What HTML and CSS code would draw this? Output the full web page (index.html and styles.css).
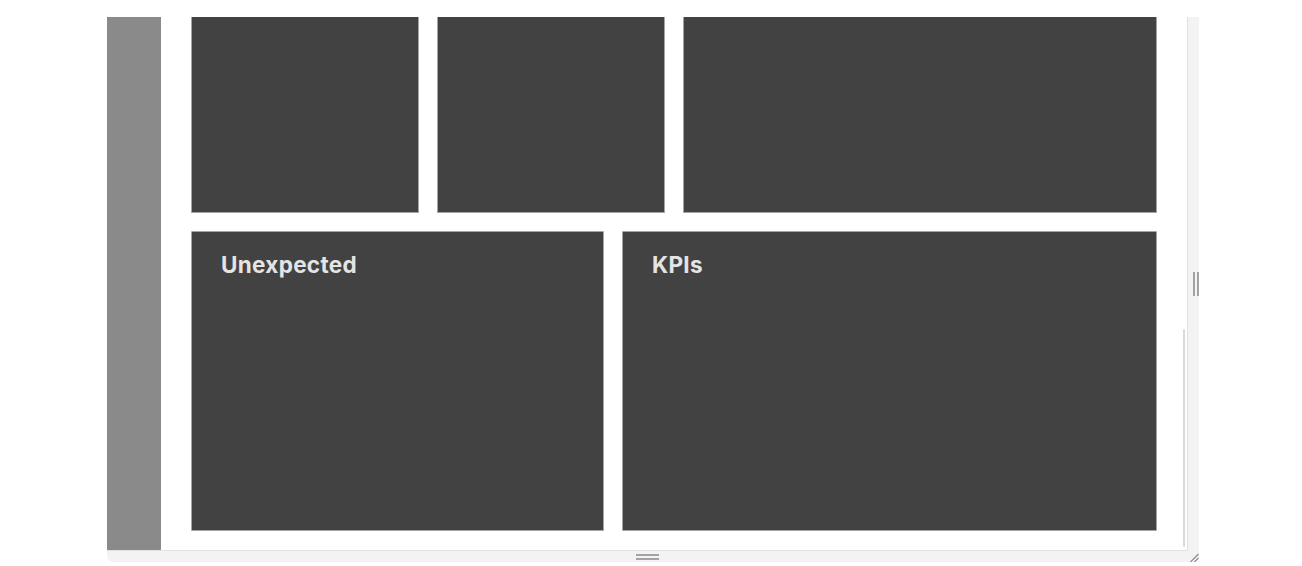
FILE: index.html
```html
<!DOCTYPE html>
<html>
<head>
<meta charset="utf-8">
<link rel="stylesheet" href="styles.css">
</head>
<body>
<div class="stage">
  <div class="resizer">
    <div class="frame">
      <aside class="sidebar"></aside>
      <main class="main">
        <div class="row row-top">
          <section class="panel panel-cut"></section>
          <section class="panel panel-cut"></section>
          <section class="panel panel-cut"></section>
        </div>
        <div class="row row-bottom">
          <section class="panel"><h2 class="panel-title">Unexpected</h2></section>
          <section class="panel"><h2 class="panel-title">KPIs</h2></section>
        </div>
      </main>
      <div class="scroll-thumb"></div>
    </div>
    <div class="grip-v"><span></span><span></span></div>
    <div class="grip-h"><span></span><span></span></div>
    <div class="grip-corner">
      <svg width="11" height="12" viewBox="0 0 11 12"><path d="M2 11.5 L10.5 3 M6 11.5 L10.5 7" stroke="#8c8c8c" stroke-width="1.2" fill="none"/></svg>
    </div>
  </div>
</div>
</body>
</html>
```
FILE: styles.css
```css
html, body {
  margin: 0;
  padding: 0;
  background: #ffffff;
  font-family: Inter, "Liberation Sans", sans-serif;
}
.stage {
  padding: 17px 0 0 107px;
}
.resizer {
  width: 1092px;
  height: 545px;
  background: #f3f3f3;
  border-radius: 0 0 6px 6px;
  display: grid;
  grid-template-columns: 1081px 11px;
  grid-template-rows: 534px 11px;
}
.frame {
  position: relative;
  display: flex;
  background: #ffffff;
  border-right: 1px solid #e2e2e2;
  border-bottom: 1px solid #e2e2e2;
  overflow: hidden;
}
.sidebar {
  width: 54px;
  flex: none;
  background: #8a8a8a;
}
.main {
  flex: 1;
  padding: 0 29px 0 30px;
  display: flex;
  flex-direction: column;
  gap: 18px;
}
.row {
  display: grid;
  gap: 18px;
}
.row-top {
  grid-template-columns: 228px 228px 474px;
  height: 196px;
}
.row-bottom {
  grid-template-columns: 413px 535px;
  height: 300px;
}
.panel {
  background: #424242;
  border: 1px solid #a4a4a4;
  border-radius: 1px;
  box-sizing: border-box;
  padding: 19px 29px;
}
.panel-cut {
  border-top: none;
}
.panel-title {
  margin: 0;
  font-size: 22.5px;
  line-height: 28px;
  font-weight: 700;
  letter-spacing: 0.3px;
  color: #e4e4e4;
}
.scroll-thumb {
  position: absolute;
  right: 2px;
  top: 312px;
  width: 2px;
  height: 218px;
  border-radius: 1px;
  background: #dadada;
}
.grip-v {
  display: flex;
  align-items: center;
  gap: 2px;
  padding-left: 5px;
}
.grip-v span {
  width: 2px;
  height: 24px;
  background: #a3a3a3;
}
.grip-h {
  display: flex;
  flex-direction: column;
  align-items: center;
  justify-content: center;
  gap: 2px;
}
.grip-h span {
  width: 23px;
  height: 2px;
  background: #a3a3a3;
}
.grip-corner {
  display: flex;
}
```
